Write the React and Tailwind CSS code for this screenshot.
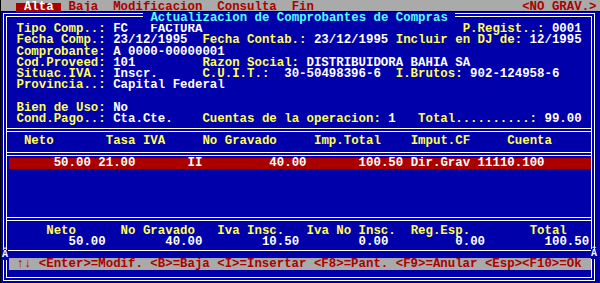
const Y = "text-[#ffff55]";
const W = "text-white";
const R = "text-[#aa0000]";

// one text-mode line: segments are [column, text, colour, extra classes]
function Row({ segs, className = "", cell = "h-[11.19px]" }) {
  const out = [];
  let cur = 0;
  segs.forEach(([col, text, color, extra], i) => {
    if (col > cur)
      out.push(
        <span key={"s" + i} className={`inline-block align-top ${cell}`}>
          {" ".repeat(col - cur)}
        </span>
      );
    out.push(
      <span key={i} className={`inline-block align-top ${extra || cell} ${color}`}>
        {text}
      </span>
    );
    cur = col + text.length;
  });
  return <div className={`h-[11.19px] leading-[11.19px] whitespace-pre ${className}`}>{out}</div>;
}

function DoubleRule() {
  return <div className="h-[4px] border-y border-white" />;
}

const header = [
  [[2, "Tipo Comp..: ", Y], [15, "FC", W], [20, "FACTURA", W], [62, "P.Regist..: ", Y], [74, "0001", W]],
  [[2, "Fecha Comp.: ", Y], [15, "23/12/1995", W], [27, "Fecha Contab.: ", Y], [42, "23/12/1995", W], [53, "Incluir en DJ de: ", Y], [71, "12/1995", W]],
  [[2, "Comprobante: ", Y], [15, "A 0000-00000001", W]],
  [[2, "Cod.Proveed: ", Y], [15, "101", W], [27, "Razon Social: ", Y], [41, "DISTRIBUIDORA BAHIA SA", W]],
  [[2, "Situac.IVA.: ", Y], [15, "Inscr.", W], [27, "C.U.I.T.: ", Y], [38, "30-50498396-6", W], [53, "I.Brutos: ", Y], [63, "902-124958-6", W]],
  [[2, "Provincia..: ", Y], [15, "Capital Federal", W]],
  [],
  [[2, "Bien de Uso: ", Y], [15, "No", W]],
  [[2, "Cond.Pago..: ", Y], [15, "Cta.Cte.", W], [27, "Cuentas de la operacion: ", Y], [52, "1", W], [56, "Total..........: ", Y], [73, "99.00", W]],
];

const columns = [[3, "Neto", Y], [14, "Tasa IVA", Y], [27, "No Gravado", Y], [42, "Imp.Total", Y], [55, "Imput.CF", Y], [68, "Cuenta", Y]];

const item = [[7, "50.00", W], [13, "21.00", W], [25, "II", W], [36, "40.00", W], [48, "100.50", W], [55, "Dir.Grav", W], [64, "11110.100", W]];

const totalsLabels = [[6, "Neto", Y], [16, "No Gravado", Y], [29, "Iva Insc.", Y], [41, "Iva No Insc.", Y], [55, "Reg.Esp.", Y], [71, "Total", Y]];
const totalsValues = [[9, "50.00", W], [22, "40.00", W], [35, "10.50", W], [48, "0.00", W], [61, "0.00", W], [73, "100.50", W]];

export default function App() {
  return (
    <div className="w-[600px] h-[283px] overflow-hidden bg-black pl-[1px] flex flex-col font-bold text-[12.4px] font-['Liberation_Mono','DejaVu_Sans_Mono',monospace]">
      {/* menu bar */}
      <div className="h-[12px] shrink-0 bg-[#aaaaaa] border-b border-black pt-[1.83px]">
        <Row
          className="ml-[0.6px]"
          cell="h-[9.2px]"
          segs={[
            [2, " Alta ", W, "mt-[1px] h-[9.2px] leading-[9.19px] bg-[#aa0000]"],
            [9, "Baja", R],
            [15, "Modificacion", R],
            [29, "Consulta", R],
            [39, "Fin", R],
            [70, "<NO GRAV.>", R],
          ]}
        />
      </div>

      <div className="relative flex-1 bg-[#0000aa] pt-[1px] pl-[2px] pr-[5px] pb-[2px] flex flex-col">
        <div className="flex-1 border border-white p-[2px] flex flex-col">
          <div className="flex-1 border border-white flex flex-col">
            <div className="h-[111px] pt-[7.21px]">
              {header.map((segs, i) => (
                <Row key={i} className="-ml-[5.4px]" segs={segs} />
              ))}
            </div>
            <DoubleRule />
            <div className="h-[20px] pt-[4.11px]">
              <Row className="-ml-[5.4px]" segs={columns} />
            </div>
            <DoubleRule />
            <div className="h-[61px] pt-[2.49px]">
              <div className="ml-[2.3px] h-[11px] bg-[#aa0000]">
                <Row className="-ml-[7.7px]" segs={item} />
              </div>
            </div>
            <DoubleRule />
            <div className="h-[29px] pt-[4.63px]">
              <Row className="-ml-[5.4px]" segs={totalsLabels} />
              <Row className="-ml-[5.4px]" segs={totalsValues} />
            </div>
            <div className="h-[1px] bg-white" />
            <div className="h-[26px] pt-[7px]">
              <div className="ml-[2.3px] h-[12px] bg-[#aaaaaa] pt-[1.2px]">
                <Row
                  className="-ml-[7.7px]"
                  cell="h-[10.8px]"
                  segs={[[2, "↑↓ <Enter>=Modif. <B>=Baja <I>=Insertar <F8>=Pant. <F9>=Anular <Esp><F10>=Ok", R]]}
                />
              </div>
            </div>
          </div>
        </div>

        {/* window title sits over the top frame */}
        <div className="absolute left-[142px] top-[1.02px]">
          <Row segs={[[0, " Actualizacion de Comprobantes de Compras ", "text-[#55ffff] bg-[#0000aa] h-[11px]"]]} />
        </div>
        <span className="absolute left-[1px] top-[238px] text-[10px] leading-none text-white bg-[#0000aa]">Â</span>
        <span className="absolute left-[590px] top-[237px] text-[10px] leading-none text-white bg-[#0000aa]">Â</span>
      </div>
    </div>
  );
}
